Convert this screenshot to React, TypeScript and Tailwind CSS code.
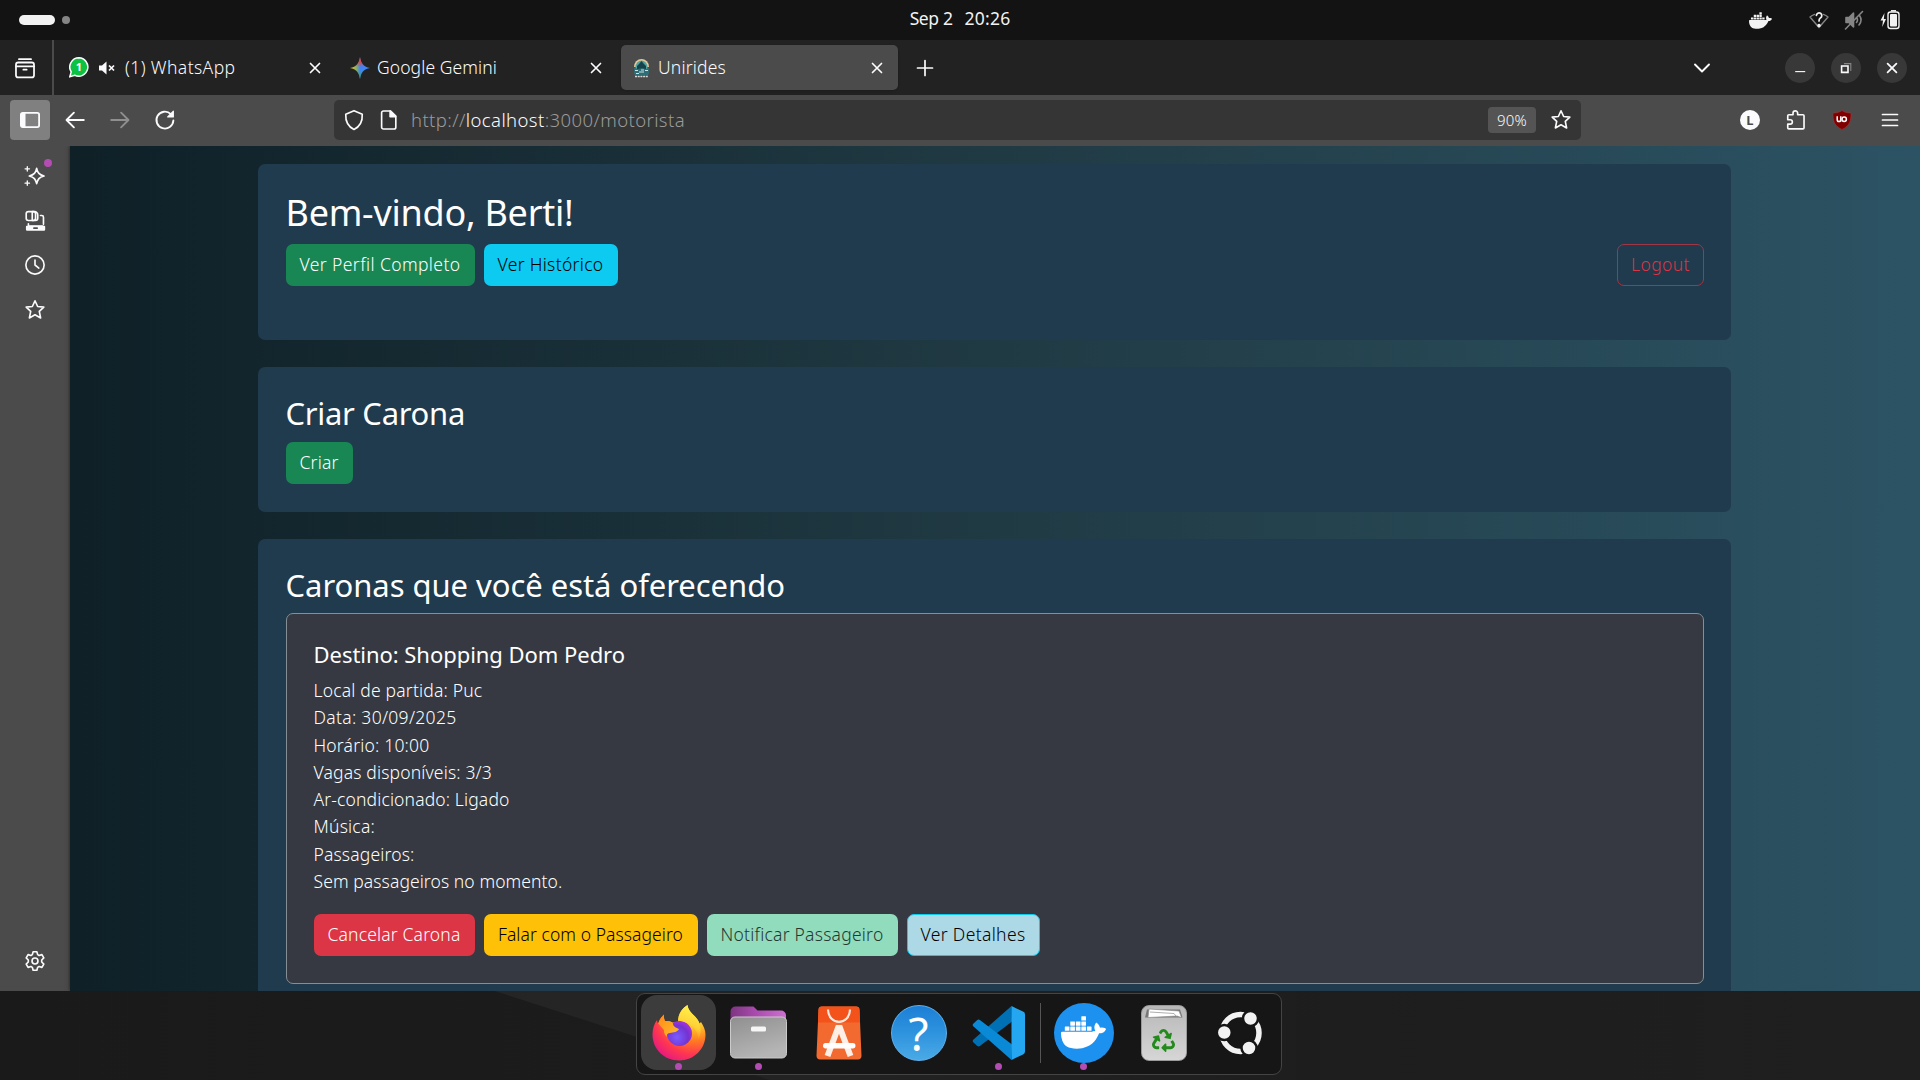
import type { ReactNode } from "react";
import { SiDocker } from "react-icons/si";
import { FaRecycle } from "react-icons/fa";

function Icon({ size = 20, sw = 1.6, className = "", children }: { size?: number; sw?: number; className?: string; children: ReactNode }) {
  return (
    <svg width={size} height={size} viewBox="0 0 20 20" fill="none" stroke="currentColor" strokeWidth={sw} strokeLinecap="round" strokeLinejoin="round" className={"shrink-0 " + className}>
      {children}
    </svg>
  );
}

const CloseIcon = ({ className = "" }: { className?: string }) => (
  <Icon size={20} sw={1.7} className={className}><path d="M5.500 5.500l9 9M14.500 5.500l-9 9" /></Icon>
);
const StarIcon = () => (
  <Icon size={22} sw={1.5}><path d="M10 1.600 12.400 6.800 18 7.400 13.900 11.300 15.100 17.200 10 14.400 4.900 17.200 6.100 11.300 2 7.400 7.600 6.800Z" /></Icon>
);

function TopBar() {
  return (
    <header className="grid h-10 shrink-0 grid-cols-3 items-center bg-[#131313] text-[#f2f2f2]">
      <div className="flex items-center gap-[7px] pl-[19px]">
        <span className="h-2.5 w-9 rounded-full bg-[#f2f2f2]" />
        <span className="size-2 rounded-full bg-[#858585]" />
      </div>
      <div className="flex justify-center gap-3 pb-[3px] font-normal">
        <span className="tracking-[-0.38px]">Sep 2</span>
        <span className="tracking-[0.22px]">20:26</span>
      </div>
      <div className="flex items-center justify-end pr-5">
        <SiDocker className="mr-[37px] size-[23px]" />
        <Icon size={20} sw={1.7} className="mr-[15px]">
          <path d="M5.600 4.400A15 15 0 0 0 1 7l9 10.500L19 7a15 15 0 0 0-4.600-2.600" stroke="#858585" strokeWidth="1.400" />
          <path d="M7.400 5.400a2.700 2.700 0 1 1 4 2.500C10.300 8.700 10 9.300 10 11" />
          <circle cx="10" cy="15.600" r=".9" fill="currentColor" />
        </Icon>
        <Icon size={20} sw={1.6} className="mr-4 text-[#858585]">
          <path d="M2 7.500h3L9.500 3v14L5 12.500H2z" fill="currentColor" />
          <path d="M1.500 19 18.500 1.500M12.500 7.500c1.200 1.600 1.200 3.600 0 5M15.500 5.500c2 3 2 6.500-.5 9.500" />
        </Icon>
        <svg width="20" height="20" viewBox="0 0 20 20" className="shrink-0">
          <path d="M4.500 3 .5 10.500H3L2.200 17 6 9H3.800z" fill="#f2f2f2" />
          <rect x="8" y="2" width="11" height="16.500" rx="2.500" fill="none" stroke="#f2f2f2" strokeWidth="1.400" />
          <path d="M11 .8h5" stroke="#f2f2f2" strokeWidth="1.500" />
          <rect x="10" y="4" width="7" height="12.500" rx="1" fill="#f2f2f2" />
        </svg>
      </div>
    </header>
  );
}

function TabStrip() {
  return (
    <div className="flex h-[55px] shrink-0 items-center bg-[#222222] text-[#fbfbfe]">
      <div className="flex h-full w-[54px] items-center border-r-2 border-[#4b4b4b] pl-[14px]">
        <Icon size={22} sw={1.6}>
          <path d="M4.500 2h11" /><rect x="1.800" y="5" width="16.400" height="13.500" rx="2" /><path d="M1.800 8.500h16.400M8.500 11.500h3" />
        </Icon>
      </div>
      <div className="flex w-[282px] items-center pl-[15px] pr-[11px]">
        <svg width="20" height="21" viewBox="0 0 20 21">
          <path d="M10 .8a9.200 9.200 0 1 1-4.300 17.500L.8 19.800l1.400-4.900A9.200 9.200 0 0 1 10 .8z" fill="#0dc143" stroke="#fff" strokeWidth="1.500" />
          <text x="10" y="14" textAnchor="middle" fontSize="11" fontWeight="700" fill="#fff" fontFamily="Noto Sans">1</text>
        </svg>
        <svg width="17" height="14" viewBox="0 0 17 14" className="ml-2.5">
          <path d="M0 4.500h3L7.500.5v13L3 9.500H0z" fill="#fbfbfe" />
          <path d="M10 4.500l5 5M15 4.500l-5 5" stroke="#fbfbfe" strokeWidth="1.700" />
        </svg>
        <span className="ml-[9px] tracking-[0.4px]">(1) WhatsApp</span>
        <CloseIcon className="ml-auto" />
      </div>
      <div className="flex w-[285px] items-center pl-[14px] pr-[15px]">
        <svg width="20" height="22" viewBox="0 0 20 22">
          <defs>
            <linearGradient id="gemA" x1="0" x2="1"><stop offset="0" stopColor="#fbbc04" /><stop offset=".3" stopColor="#8fb35a" /><stop offset=".5" stopColor="#4285f4" /><stop offset="1" stopColor="#3a86ff" /></linearGradient>
            <linearGradient id="gemB" x1="0" y1="0" x2="0" y2="1"><stop offset="0" stopColor="#ea4335" /><stop offset=".2" stopColor="#ea4335" /><stop offset=".45" stopColor="#ea4335" stopOpacity="0" /><stop offset=".6" stopColor="#34a853" stopOpacity="0" /><stop offset="1" stopColor="#34a853" /></linearGradient>
          </defs>
          <path d="M10 0c.8 6.300 3.800 9.900 10 11-6.200 1.100-9.200 4.700-10 11C9.200 15.700 6.200 12.100 0 11 6.200 9.900 9.200 6.300 10 0z" fill="url(#gemA)" />
          <path d="M10 0c.8 6.300 3.800 9.900 10 11-6.200 1.100-9.200 4.700-10 11C9.200 15.700 6.200 12.100 0 11 6.200 9.900 9.200 6.300 10 0z" fill="url(#gemB)" />
        </svg>
        <span className="ml-[7px] tracking-[0.1px]">Google Gemini</span>
        <CloseIcon className="ml-auto" />
      </div>
      <div className="flex h-[45px] w-[277px] items-center rounded-[5px] bg-[#4b4b4b] pl-3 pr-[11px] shadow">
        <svg width="17" height="20" viewBox="0 0 17 20">
          <path d="M1 9a7.500 8 0 0 1 15 0z" fill="#e9c998" />
          <path d="M2.500 9a6 6.500 0 0 1 12 0v8h-12z" fill="#4fa39f" />
          <path d="M4 13V8l2-2 2.500-3L11 6l2 2v5z" fill="#16424b" />
          <path d="M1 10l4 1 4-1 4 1 3-1v6l-2 1H3l-2-1z" fill="#2f6d76" />
          <path d="M2 12.500h3M6 14h5M12 12.500h3M3 15.500h3M8 12h3" stroke="#cfe3e2" strokeWidth="1" />
          <path d="M2 18.500h13" stroke="#d8d8d8" strokeWidth="1.600" strokeDasharray="2 .7" />
        </svg>
        <span className="ml-2 tracking-[0.19px]">Unirides</span>
        <CloseIcon className="ml-auto" />
      </div>
      <Icon size={20} sw={1.7} className="ml-[17px]"><path d="M10 2.500v15M2.500 10h15" /></Icon>
      <div className="ml-auto flex items-center pr-[13px]">
        <Icon size={20} sw={1.9} className="mr-[73px]"><path d="M3 6.500l7 7 7-7" /></Icon>
        <div className="flex gap-4">
          <span className="grid size-[30px] place-items-center rounded-full bg-[#383838]"><Icon size={16} sw={1.4}><path d="M4 14.500h12.500" strokeLinecap="butt" /></Icon></span>
          <span className="grid size-[30px] place-items-center rounded-full bg-[#383838]">
            <Icon size={16} sw={2}><path d="M4.500 7.500h8v8h-8z" strokeLinejoin="miter" /><path d="M8 4.500h8V13" stroke="#858585" strokeWidth="1.400" strokeLinejoin="miter" /></Icon>
          </span>
          <span className="grid size-[30px] place-items-center rounded-full bg-[#383838]"><Icon size={16} sw={2.2}><path d="M4.500 4.500l11 11M15.500 4.500l-11 11" /></Icon></span>
        </div>
      </div>
    </div>
  );
}

function Toolbar() {
  return (
    <div className="flex h-[51px] shrink-0 items-center bg-[#4b4b4b] pb-px pl-2.5 text-[#fbfbfe]">
      <span className="grid h-10 w-10 place-items-center rounded bg-[#808080]">
        <svg width="20" height="16" viewBox="0 0 20 16"><rect x=".9" y=".9" width="18.200" height="14.200" rx="1.800" fill="none" stroke="#fbfbfe" strokeWidth="1.800" /><path d="M1 1h4.500v14H1z" fill="#fbfbfe" /></svg>
      </span>
      <Icon size={22} sw={1.7} className="ml-[14px]"><path d="M18 10H2.500M9 3.300 2.300 10 9 16.700" /></Icon>
      <Icon size={22} sw={1.7} className="ml-[23px] text-[#8f8f8f]"><path d="M2 10h15.500M11 3.300 17.700 10 11 16.700" /></Icon>
      <Icon size={22} sw={1.7} className="ml-[23px]"><path d="M17.600 10.500A7.700 7.700 0 1 1 15.300 4.600" /><path d="M17.600 2v5.200h-5.200z" fill="currentColor" strokeWidth="1" /></Icon>
      <div className="ml-[158px] flex h-10 w-[1247px] items-center rounded-[5px] bg-[#353535] pl-[9px] pr-[9px]">
        <Icon size={22} sw={1.5}><path d="M10 1.500l7.500 3.200c.3 5.500-1.800 11-7.500 13.900C4.300 15.700 2.200 10.200 2.500 4.700z" /></Icon>
        <Icon size={22} sw={1.5} className="ml-[13px]"><path d="M5 1.800h6.500l4.700 4.700v10a1.700 1.700 0 0 1-1.700 1.700H5a1.700 1.700 0 0 1-1.700-1.700v-13A1.700 1.700 0 0 1 5 1.800z" /><path d="M11 2v5h5z" fill="currentColor" /></Icon>
        <p className="ml-[11px] text-[18.500px] tracking-[0.4px] text-[#9a9a9a]">
          http://<span className="text-[#fbfbfe]">localhost</span>:3000/motorista
        </p>
        <span className="ml-auto grid h-[26px] w-12 place-items-center rounded bg-[#545454] text-[15px] tracking-[0.3px]">90%</span>
        <span className="ml-[14px]"><StarIcon /></span>
      </div>
      <span className="ml-[159px] grid size-5 place-items-center rounded-full bg-[#fbfbfe] text-[13px] font-bold leading-none text-[#4b4b4b]">L</span>
      <Icon size={22} sw={1.5} className="ml-[25px]">
        <path d="M7.300 5.200V3.800a2.100 2.100 0 0 1 4.200 0v1.400h4.800a1 1 0 0 1 1 1V17a1 1 0 0 1-1 1H3.500a1 1 0 0 1-1-1v-3.200h2.200a2 2 0 0 0 0-4H2.500V6.200a1 1 0 0 1 1-1z" />
      </Icon>
      <svg width="20" height="20" viewBox="0 0 20 20" className="ml-[25px]">
        <path d="M10 .5C7.500 2.400 4 3 1 3c0 7 .5 12.500 9 16.500C18.500 15.500 19 10 19 3 16 3 12.500 2.400 10 .5z" fill="#800000" stroke="#a33" strokeWidth=".6" />
        <path d="M5.200 6.300v3.400a1.800 1.800 0 0 0 3.600 0M8.800 6.300v5.200" fill="none" stroke="#fff" strokeWidth="1.500" />
        <circle cx="12.200" cy="9.300" r="2.200" fill="none" stroke="#fff" strokeWidth="1.500" />
      </svg>
      <Icon size={20} sw={1.7} className="ml-7"><path d="M2.500 4.500h15M2.500 10h15M2.500 15.500h15" /></Icon>
    </div>
  );
}

function Sidebar() {
  return (
    <aside className="flex w-[70px] shrink-0 flex-col items-center bg-[#4b4b4b] pb-[19px] pt-[19px] text-[#fbfbfe]">
      <div className="relative">
        <Icon size={22} sw={1.5}>
          <path d="M11.500 3c.9 4.200 2.300 5.900 6.700 7-4.400 1.100-5.800 2.800-6.700 7-.9-4.200-2.300-5.900-6.700-7 4.400-1.100 5.800-2.800 6.700-7z" />
          <path d="M3 1.500v4M1 3.500h4M3 14.500v4M1 16.500h4" strokeWidth="1.200" />
        </Icon>
        <span className="absolute -top-1.5 left-[20px] size-2 rounded-full bg-[#b34cb3]" />
      </div>
      <Icon size={22} sw={1.5} className="mt-[23px]">
        <rect x="2" y="1.500" width="8.500" height="8" rx="2" /><path d="M7.500 1.500h2a3 3 0 0 1 3 3v3a2 2 0 0 1-2 2h-3z" />
        <path d="M15 5h1.200a1.500 1.500 0 0 1 1.500 1.500V13M4 12.500V14.500H17" /><path d="M2.500 15h16v3h-16z" fill="currentColor" /><path d="M9 16.500h3" stroke="#4b4b4b" />
      </Icon>
      <Icon size={22} sw={1.5} className="mt-[22px]"><circle cx="10" cy="10" r="8.300" /><path d="M10 5.500V10l3.500 2.800" /></Icon>
      <div className="mt-[23px]"><StarIcon /></div>
      <Icon size={22} sw={1.5} className="mt-auto">
        <circle cx="10" cy="10" r="2.700" />
        <path d="M8.300 1.600h3.400l.7 2.600 1.300.8 2.600-.8 1.700 3-1.900 1.900v1.800l1.900 1.900-1.700 3-2.600-.8-1.300.8-.7 2.600H8.300l-.7-2.600-1.300-.8-2.600.8-1.700-3 1.900-1.900V9.100L2 7.200l1.700-3 2.600.8 1.300-.8z" />
      </Icon>
    </aside>
  );
}

function Btn({ className, children }: { className: string; children: string }) {
  return <button className={"grid h-[42px] place-items-center whitespace-nowrap rounded-[7px] pb-[2px] " + className}>{children}</button>;
}

const rideLines: [string, string][] = [
  ["Local de partida: Puc", "tracking-[0.19px]"],
  ["Data: 30/09/2025", "tracking-[0.31px]"],
  ["Horário: 10:00", "tracking-[0.19px]"],
  ["Vagas disponíveis: 3/3", "tracking-[0.16px]"],
  ["Ar-condicionado: Ligado", "tracking-[0.14px]"],
  ["Música:", "tracking-[0.22px]"],
  ["Passageiros:", "tracking-[0.16px]"],
  ["Sem passageiros no momento.", "tracking-[0.09px]"],
];

function Page() {
  return (
    <main className="flex-1 overflow-hidden bg-linear-to-r from-[#0f2027] via-[#203a43] to-[#2c5364] pl-[188px] pt-[17.700px] text-white shadow-[0_0_4px_rgba(0,0,0,0.6)]">
      <div className="flex w-[1473px] flex-col gap-[27px]">
        <section className="h-[176.700px] rounded-[7px] bg-[#203a4e] py-[27px] pl-[27.500px] pr-[27px]">
          <h1 className="h-[53px] text-[36px] font-normal leading-[44px] tracking-[-0.25px]">Bem-vindo, Berti!</h1>
          <div className="flex items-center gap-[9px]">
            <Btn className="w-[189px] bg-[#198754] tracking-[0.41px] text-white">Ver Perfil Completo</Btn>
            <Btn className="w-[134px] bg-[#0dcaf0] tracking-[0.32px] text-black">Ver Histórico</Btn>
            <Btn className="ml-auto w-[87px] border border-[#a03747] tracking-[0.41px] text-[#dc3545]">Logout</Btn>
          </div>
        </section>
        <section className="h-[144.600px] rounded-[7px] bg-[#203a4e] py-[27px] pl-[27.500px] pr-[27px]">
          <h2 className="h-[48px] text-[31px] font-normal leading-[39px] tracking-[-0.3px]">Criar Carona</h2>
          <Btn className="w-[67px] bg-[#198754] tracking-[0.17px] text-white">Criar</Btn>
        </section>
        <section className="h-[480px] rounded-[7px] bg-[#203a4e] py-[27px] pl-[27.500px] pr-[27px]">
          <h2 className="h-[47px] text-[31px] font-normal leading-[38px] tracking-[-0.05px]">Caronas que você está oferecendo</h2>
          <article className="h-[371px] rounded-[7px] border border-[#848e94] bg-[#363941] px-[27px] pt-[27px]">
            <h5 className="h-[36px] text-[22px] font-normal leading-[27px] tracking-[-0.04px]">Destino: Shopping Dom Pedro</h5>
            {rideLines.map(([text, tracking]) => <p key={text} className={"h-[27.300px] leading-[27px] " + tracking}>{text}</p>)}
            <div className="mt-[19px] flex gap-[9px]">
              <Btn className="w-[161px] bg-[#dc3545] tracking-[0.16px] text-white">Cancelar Carona</Btn>
              <Btn className="w-[214px] bg-[#ffc107] tracking-[0.07px] text-black">Falar com o Passageiro</Btn>
              <Btn className="w-[191px] bg-[#90dcbd] tracking-[0.23px] text-[#26372f]">Notificar Passageiro</Btn>
              <Btn className="w-[133px] border border-[#0dcaf0] bg-[#add8e6] tracking-[0.35px] text-black">Ver Detalhes</Btn>
            </div>
          </article>
        </section>
      </div>
    </main>
  );
}

function DockItem({ running, active, className = "", children }: { running?: boolean; active?: boolean; className?: string; children: ReactNode }) {
  return (
    <div className={"relative grid h-[75px] w-[75px] shrink-0 place-items-center rounded-2xl " + (active ? "bg-[#3c3c3c] " : "") + className}>
      {children}
      {running && <span className="absolute bottom-0 left-[34px] size-[7px] rounded-full bg-[#b34cb3]" />}
    </div>
  );
}

function Firefox() {
  return (
    <svg width="54" height="56" viewBox="0 0 54 56">
      <defs>
        <radialGradient id="ffBody" cx=".8" cy=".1" r="1.050"><stop offset="0" stopColor="#fff44f" /><stop offset=".3" stopColor="#ffc02b" /><stop offset=".52" stopColor="#ff7a22" /><stop offset=".75" stopColor="#ff3750" /><stop offset="1" stopColor="#e31587" /></radialGradient>
        <radialGradient id="ffGlobe" cx=".4" cy=".65" r=".75"><stop offset="0" stopColor="#7a5cff" /><stop offset=".6" stopColor="#7333d0" /><stop offset="1" stopColor="#b833e1" /></radialGradient>
        <linearGradient id="ffTail" x1=".6" y1="0" x2=".4" y2="1"><stop offset="0" stopColor="#fff44f" /><stop offset=".6" stopColor="#ffd034" /><stop offset="1" stopColor="#ff980e" stopOpacity="0" /></linearGradient>
        <linearGradient id="ffHead" x1="0" y1="0" x2="1" y2="1"><stop offset="0" stopColor="#ff8a16" /><stop offset="1" stopColor="#ffbd2e" /></linearGradient>
      </defs>
      <path d="M27 55.500C12 55.500.5 44 .5 29.500c0-6 1.700-10.500 4.500-14.500.2 1.800.5 2.800 1.200 3.600C7.500 14.500 9.500 11.800 12 9.500c-.3 2.400 0 4.500 1 6.500 2.500-.2 5 .2 7.500 1.500L26 17c0-7 3.500-13.500 9.500-17 .5 4.500 3.500 7.500 7 11 2.200 2.200 4 4.500 5 7.500l1.500-1.500c2.500 4 4.500 8 4.500 12.500C53.500 44 42 55.500 27 55.500z" fill="url(#ffBody)" />
      <circle cx="27.500" cy="28.500" r="12.500" fill="url(#ffGlobe)" />
      <path d="M26 15.500C26.500 9 30 3.500 35.500 0c.5 4.500 3.500 7.500 7 11 6 6 8 13.500 4 23.500-1.500-9-4-12-8-14.500-3-2.500-8-4-12.500-4.500z" fill="url(#ffTail)" />
      <path d="M6.200 18.600C7.500 14.500 9.500 11.800 12 9.500c-.3 2.400 0 4.500 1 6.500 2.500-.2 5 .2 7.500 1.500l1 3c1 1.500 3 2.500 5.500 3.500-1.500 3-5.500 3.500-9 4-3 .4-3.500 2-3 4-2-2-3.500-4.500-3-7z" fill="url(#ffHead)" />
    </svg>
  );
}

function Dock() {
  return (
    <div className="relative z-10 mr-[2px] flex h-[82px] w-[646px] items-start rounded-[9px] border border-[#444] bg-[#161616] pl-1 pt-px">
      <DockItem active running><Firefox /></DockItem>
      <DockItem running className="ml-[5px]">
        <svg width="57" height="53" viewBox="0 0 57 53">
          <defs>
            <linearGradient id="fTab" x1="0" x2="1"><stop offset="0" stopColor="#7d3580" /><stop offset=".45" stopColor="#a94bae" /><stop offset="1" stopColor="#cc70d0" /></linearGradient>
            <linearGradient id="fBody" x1="0" y1="0" x2=".4" y2="1"><stop offset="0" stopColor="#8f8f8f" /><stop offset="1" stopColor="#b5b5b5" /></linearGradient>
          </defs>
          <path d="M.5 14V5.500a5 5 0 0 1 5-5h18l4 4H51a5 5 0 0 1 5 5V20H.5z" fill="url(#fTab)" />
          <rect x=".5" y="11" width="56" height="41" rx="4.500" fill="url(#fBody)" stroke="#cacaca" />
          <rect x="21" y="20.500" width="15" height="5" rx="1.500" fill="#f6f6f6" />
        </svg>
      </DockItem>
      <DockItem className="ml-[5px]">
        <svg width="46" height="54" viewBox="0 0 46 54">
          <path d="M6 .5h34a3.500 3.500 0 0 1 3.500 3.300l2 46a3.500 3.500 0 0 1-3.500 3.700H4a3.500 3.500 0 0 1-3.500-3.700l2-46A3.500 3.500 0 0 1 6 .5z" fill="#f26a30" />
          <path d="M6 .5h34a3.500 3.500 0 0 1 3.500 3.300L44 16.500H2l.5-12.700A3.500 3.500 0 0 1 6 .5z" fill="#f4521b" />
          <path d="M12 3.500C12.500 20 33.500 20 34 3.500" fill="none" stroke="#fde8dd" strokeWidth="2.200" />
          <path d="M11.500 50 22 22h2L34.500 50" fill="none" stroke="#fdeee6" strokeWidth="6" />
          <rect x="7" y="37" width="32.500" height="5.500" rx="2.700" fill="#fff" />
        </svg>
      </DockItem>
      <DockItem className="ml-[5px]">
        <div className="grid size-14 place-items-center rounded-full border border-[#5fb2ee] bg-linear-to-b from-[#1c7fd6] via-[#2e93de] to-[#4aaae6]">
          <span className="text-[46px] font-normal leading-[50px] text-white">?</span>
        </div>
      </DockItem>
      <DockItem running className="ml-[5px]">
        <svg width="54" height="54" viewBox="0 0 54 54">
          <path d="M39.500 0 1.500 33.500a2 2 0 0 0 0 3l3.500 3.300a2.500 2.500 0 0 0 3.200 0L40 15.500z" fill="#0070b5" />
          <path d="M39.500 54 1.500 20.500a2 2 0 0 1 0-3L5 14.200a2.500 2.500 0 0 1 3.200 0L40 38.500z" fill="#0a8ad6" />
          <path d="M39.500 0 51 5.600a3 3 0 0 1 2 2.900v37a3 3 0 0 1-2 2.900L39.500 54z" fill="#24a7f0" />
        </svg>
      </DockItem>
      <span className="ml-[4px] mt-2 h-[60px] w-px bg-[#555]" />
      <DockItem running className="ml-[5px]">
        <div className="grid size-[60px] place-items-center rounded-full bg-[#1d91ef]"><SiDocker className="size-[45px] text-white" /></div>
      </DockItem>
      <DockItem className="ml-[5px]">
        <div className="relative grid h-[56px] w-[46px] place-items-center rounded-lg border border-[#9a9a9a] bg-linear-to-b from-[#b8b8b8] to-[#d6d6d6]">
          <svg width="38" height="10" viewBox="0 0 38 10" className="absolute left-[3px] top-0.5">
            <path d="M0 9.500 2 1.500h33l2.500 8z" fill="#777" /><path d="M3 9.500 4 1l30 2 2.500 6.500L32 8z" fill="#fff" stroke="#888" strokeWidth=".6" /><path d="M5 4l24 1.500 3 4" stroke="#999" strokeWidth=".8" fill="none" />
          </svg>
          <FaRecycle className="mt-4 size-[23px] text-[#238a1c]" />
        </div>
      </DockItem>
      <DockItem className="ml-px">
        <svg width="46" height="46" viewBox="0 0 46 46">
          <circle cx="23.500" cy="23" r="18.500" fill="none" stroke="#f2f2f2" strokeWidth="5.500" />
          <g fill="#f2f2f2" stroke="#161616" strokeWidth="2.500">
            <circle cx="7.300" cy="22.500" r="7.500" /><circle cx="33.500" cy="8.500" r="7.500" /><circle cx="32" cy="38" r="7.500" />
          </g>
        </svg>
      </DockItem>
    </div>
  );
}

export default function App() {
  return (
    <div className="flex h-[1080px] w-[1920px] flex-col overflow-hidden bg-[#1a1a1a] font-['Noto_Sans',sans-serif] text-[17.500px] font-light">
      <TopBar />
      <TabStrip />
      <Toolbar />
      <div className="flex h-[845px] shrink-0 overflow-hidden"><Sidebar /><Page /></div>
      <footer className="relative flex flex-1 items-start justify-center bg-linear-to-r from-[#1a1a1a] to-[#1f1f1f] pt-[2px]">
        <svg width="800" height="89" viewBox="0 0 800 89" className="absolute left-[495px] top-0">
          <defs><linearGradient id="beam" x1="0" x2="1"><stop offset="0" stopColor="#252525" /><stop offset="1" stopColor="#1e1e1e" /></linearGradient></defs>
          <path d="M0 0h800v89H275z" fill="url(#beam)" />
        </svg>
        <Dock />
      </footer>
    </div>
  );
}
